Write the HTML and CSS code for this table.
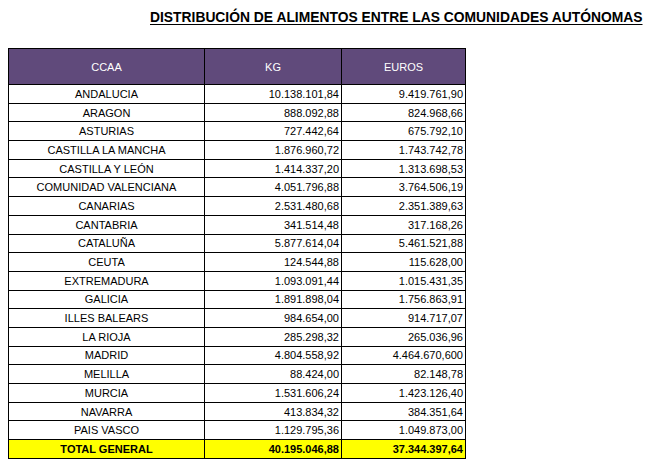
FILE: index.html
```html
<!DOCTYPE html>
<html>
<head>
<meta charset="utf-8">
<link rel="stylesheet" href="styles.css">
</head>
<body>
<h1 class="title">DISTRIBUCIÓN DE ALIMENTOS ENTRE LAS COMUNIDADES AUTÓNOMAS</h1>
<table class="data">
<colgroup>
<col class="c-name">
<col class="c-kg">
<col class="c-eur">
</colgroup>
<thead>
<tr><th>CCAA</th><th>KG</th><th>EUROS</th></tr>
</thead>
<tbody>
<tr><td>ANDALUCIA</td><td>10.138.101,84</td><td>9.419.761,90</td></tr>
<tr><td>ARAGON</td><td>888.092,88</td><td>824.968,66</td></tr>
<tr><td>ASTURIAS</td><td>727.442,64</td><td>675.792,10</td></tr>
<tr><td>CASTILLA LA MANCHA</td><td>1.876.960,72</td><td>1.743.742,78</td></tr>
<tr><td>CASTILLA Y LEÓN</td><td>1.414.337,20</td><td>1.313.698,53</td></tr>
<tr><td>COMUNIDAD VALENCIANA</td><td>4.051.796,88</td><td>3.764.506,19</td></tr>
<tr><td>CANARIAS</td><td>2.531.480,68</td><td>2.351.389,63</td></tr>
<tr><td>CANTABRIA</td><td>341.514,48</td><td>317.168,26</td></tr>
<tr><td>CATALUÑA</td><td>5.877.614,04</td><td>5.461.521,88</td></tr>
<tr><td>CEUTA</td><td>124.544,88</td><td>115.628,00</td></tr>
<tr><td>EXTREMADURA</td><td>1.093.091,44</td><td>1.015.431,35</td></tr>
<tr><td>GALICIA</td><td>1.891.898,04</td><td>1.756.863,91</td></tr>
<tr><td>ILLES BALEARS</td><td>984.654,00</td><td>914.717,07</td></tr>
<tr><td>LA RIOJA</td><td>285.298,32</td><td>265.036,96</td></tr>
<tr><td>MADRID</td><td>4.804.558,92</td><td>4.464.670,600</td></tr>
<tr><td>MELILLA</td><td>88.424,00</td><td>82.148,78</td></tr>
<tr><td>MURCIA</td><td>1.531.606,24</td><td>1.423.126,40</td></tr>
<tr><td>NAVARRA</td><td>413.834,32</td><td>384.351,64</td></tr>
<tr><td>PAIS VASCO</td><td>1.129.795,36</td><td>1.049.873,00</td></tr>
<tr class="total"><td>TOTAL GENERAL</td><td>40.195.046,88</td><td>37.344.397,64</td></tr>
</tbody>
</table>
</body>
</html>
```

FILE: styles.css
```css
html, body {
  margin: 0;
  padding: 0;
  background: #ffffff;
}
body {
  padding: 9px 0 0 8px;
  font-family: "Liberation Sans", Arial, sans-serif;
  color: #000;
}
.title {
  margin: 0 0 0 142px;
  width: 493px;
  font-family: "Liberation Sans Narrow", "Arial Narrow", "Liberation Sans", sans-serif;
  font-weight: bold;
  font-size: 13.85px;
  line-height: 16px;
  text-decoration: underline;
  text-underline-offset: 2px;
  white-space: nowrap;
  color: #000;
}
.data {
  margin-top: 23px;
  border-collapse: collapse;
  table-layout: fixed;
  width: 457px;
  font-size: 11px;
}
.c-name { width: 196px; }
.c-kg { width: 137px; }
.c-eur { width: 124px; }
.data th, .data td {
  border: 1px solid #000;
  padding: 0 2px;
  white-space: nowrap;
  overflow: hidden;
}
.data th {
  background: #604a7b;
  color: #fff;
  font-weight: normal;
  height: 35px;
  text-align: center;
}
.data td {
  height: 17.7px;
  line-height: 14px;
  text-align: right;
}
.data td:first-child {
  text-align: center;
}
.total td {
  background: #ffff00;
  font-weight: bold;
}
```
